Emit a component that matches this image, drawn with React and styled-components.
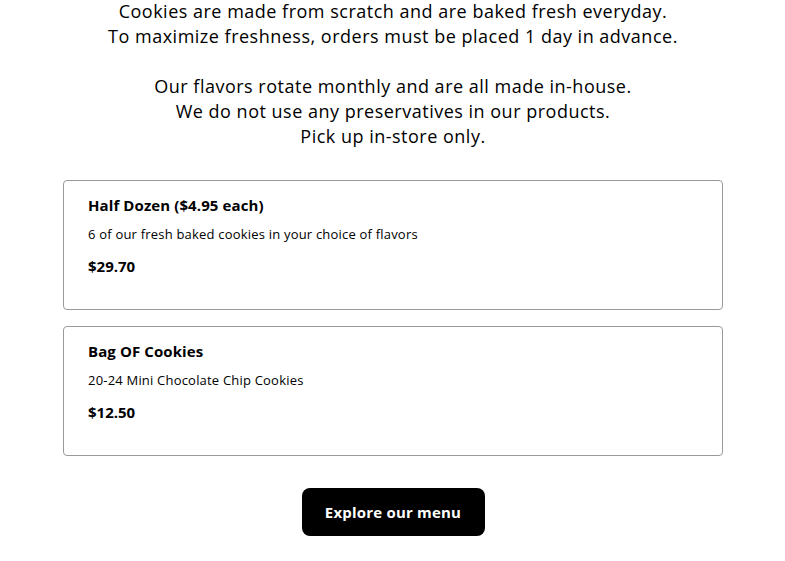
import React from "react";
import styled, { createGlobalStyle } from "styled-components";

const Global = createGlobalStyle`
  html, body { margin: 0; padding: 0; background: #fff; }
  body { font-family: "Open Sans", "Liberation Sans", sans-serif; color: #000; }
`;

const Page = styled.main`
  display: flex;
  flex-direction: column;
  align-items: center;
  padding: 0 62px 24px 63px;
`;

const Intro = styled.div`
  text-align: center;
  font-size: 18px;
  line-height: 25px;
  letter-spacing: 0.5px;
  margin-top: -1px;
`;

const Line = styled.p`
  margin: 0;
  min-height: 25px;
`;

const Cards = styled.div`
  display: flex;
  flex-direction: column;
  gap: 16px;
  width: 660px;
  margin-top: 31px;
`;

const Card = styled.div`
  border: 1px solid #9a9a9a;
  border-radius: 4px;
  height: 130px;
  box-sizing: border-box;
  padding: 14px 24px;
  display: flex;
  flex-direction: column;
`;

const Title = styled.div`
  font-size: 15px;
  font-weight: 700;
  line-height: 20px;
  letter-spacing: 0.1px;
`;

const Desc = styled.div`
  font-size: 13px;
  line-height: 18px;
  margin-top: 10px;
  letter-spacing: 0.2px;
`;

const Price = styled.div`
  font-size: 15px;
  font-weight: 700;
  line-height: 20px;
  margin-top: 13px;
`;

const Button = styled.button`
  margin-top: 32px;
  width: 183px;
  height: 48px;
  border: none;
  border-radius: 8px;
  background: #000;
  color: #fff;
  font-family: inherit;
  font-size: 15px;
  font-weight: 700;
  letter-spacing: 0.2px;
  cursor: pointer;
`;

const items = [
  { title: "Half Dozen ($4.95 each)", desc: "6 of our fresh baked cookies in your choice of flavors", price: "$29.70" },
  { title: "Bag OF Cookies", desc: "20-24 Mini Chocolate Chip Cookies", price: "$12.50" },
];

export default function App() {
  return (
    <>
      <Global />
      <Page>
        <Intro>
          <Line>Cookies are made from scratch and are baked fresh everyday.</Line>
          <Line>To maximize freshness, orders must be placed 1 day in advance.</Line>
          <Line />
          <Line>Our flavors rotate monthly and are all made in-house.</Line>
          <Line>We do not use any preservatives in our products.</Line>
          <Line>Pick up in-store only.</Line>
        </Intro>
        <Cards>
          {items.map((it) => (
            <Card key={it.title}>
              <Title>{it.title}</Title>
              <Desc>{it.desc}</Desc>
              <Price>{it.price}</Price>
            </Card>
          ))}
        </Cards>
        <Button>Explore our menu</Button>
      </Page>
    </>
  );
}
